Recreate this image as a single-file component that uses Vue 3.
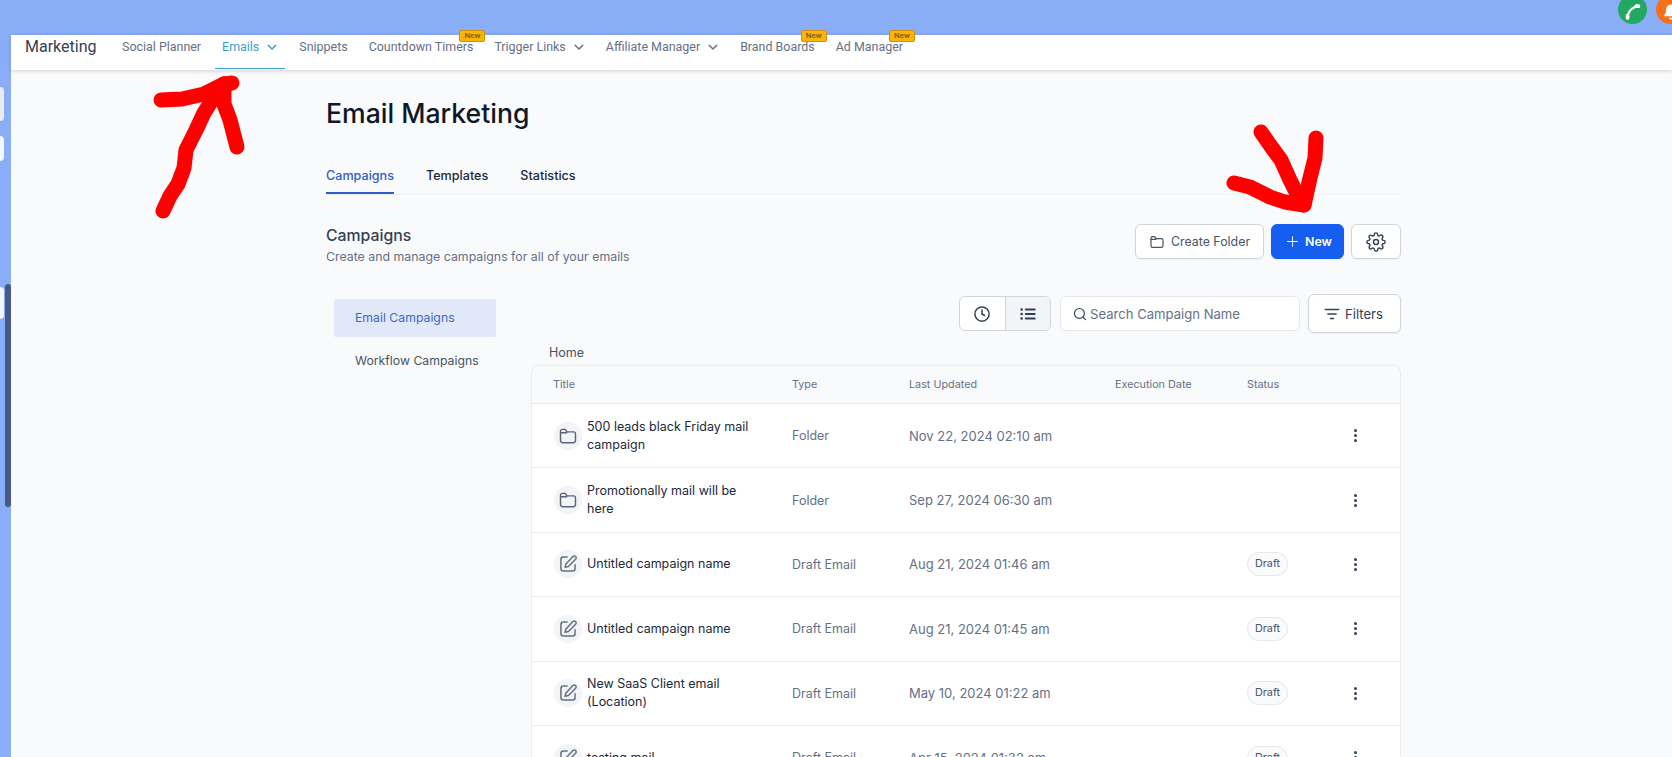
<template>
  <div class="page">
    <header class="topbar">
      <span class="call-btn">
        <svg viewBox="0 0 24 24" width="20" height="20" fill="none" stroke="#fff" stroke-linecap="round">
          <path stroke-width="2.6" d="M5.500 19c0-7 5-13 13-14"></path>
          <path stroke-width="4.600" d="M5.500 19v-2.500M18.500 5H16"></path>
        </svg>
      </span>
      <span class="bell-btn">
        <svg viewBox="0 0 24 24" width="20" height="20" fill="#fff">
          <path d="M12 3a6 6 0 0 0-6 6c0 5-2 7-3 8h18c-1-1-3-3-3-8a6 6 0 0 0-6-6z"></path>
          <path d="M9.5 19a2.6 2.6 0 0 0 5 0z"></path>
        </svg>
      </span>
    </header>

    <div class="body-row">
      <aside class="strip">
        <span class="stub stub-a"></span>
        <span class="stub stub-b"></span>
        <span class="stub stub-c"></span>
        <span class="thumb"></span>
      </aside>

      <div class="content">
        <nav class="subnav">
          <span class="brand">Marketing</span>
          <a v-for="item in navItems" :key="item.label" class="nav-item" :class="{ active: item.active }">
            <span class="nav-label">
              {{ item.label }}
              <svg v-if="item.caret" class="caret" viewBox="0 0 12 12" width="12" height="12" fill="none" stroke="currentColor" stroke-width="1.5" stroke-linecap="round" stroke-linejoin="round">
                <path d="M2.2 4.2 6 8l3.8-3.8"></path>
              </svg>
            </span>
            <span v-if="item.isNew" class="new-badge">New</span>
          </a>
        </nav>

        <main class="main">
          <h1 class="page-title">Email Marketing</h1>

          <div class="tabs">
            <a class="tab current">Campaigns</a>
            <a class="tab">Templates</a>
            <a class="tab">Statistics</a>
          </div>

          <section class="heading-row">
            <div class="heading-text">
              <h2 class="section-title">Campaigns</h2>
              <p class="section-sub">Create and manage campaigns for all of your emails</p>
            </div>
            <div class="actions">
              <button class="btn btn-folder">
                <svg viewBox="0 0 24 24" width="16" height="16" fill="none" stroke="currentColor" stroke-width="1.8" stroke-linecap="round" stroke-linejoin="round">
                  <path d="M3 6.5C3 5.1 4 4 5.4 4h3.2l2 3h8c1.3 0 2.4 1.1 2.4 2.5v8c0 1.4-1.1 2.5-2.4 2.5H5.4C4 20 3 18.900 3 17.500z"></path>
                  <path d="M3 8h7.500"></path>
                </svg>
                Create Folder
              </button>
              <button class="btn btn-new">
                <svg viewBox="0 0 24 24" width="13" height="13" fill="none" stroke="currentColor" stroke-width="1.800" stroke-linecap="round">
                  <path d="M12 3v18M3 12h18"></path>
                </svg>
                New
              </button>
              <button class="btn btn-gear" aria-label="Settings">
                <svg viewBox="0 0 24 24" width="20" height="20" fill="none" stroke="#344054" stroke-width="1.7" stroke-linecap="round" stroke-linejoin="round">
                  <circle cx="12" cy="12" r="3"></circle>
                  <path d="M19.400 15a1.650 1.650 0 0 0 .33 1.820l.06.06a2 2 0 0 1 0 2.830 2 2 0 0 1-2.830 0l-.06-.06a1.650 1.650 0 0 0-1.820-.33 1.650 1.650 0 0 0-1 1.510V21a2 2 0 0 1-2 2 2 2 0 0 1-2-2v-.09A1.650 1.650 0 0 0 9 19.400a1.650 1.650 0 0 0-1.820.33l-.06.06a2 2 0 0 1-2.830 0 2 2 0 0 1 0-2.830l.06-.06a1.650 1.650 0 0 0 .33-1.820 1.650 1.650 0 0 0-1.510-1H3a2 2 0 0 1-2-2 2 2 0 0 1 2-2h.09A1.650 1.650 0 0 0 4.600 9a1.650 1.650 0 0 0-.33-1.820l-.06-.06a2 2 0 0 1 0-2.830 2 2 0 0 1 2.830 0l.06.06a1.650 1.650 0 0 0 1.820.33H9a1.650 1.650 0 0 0 1-1.510V3a2 2 0 0 1 2-2 2 2 0 0 1 2 2v.09a1.650 1.650 0 0 0 1 1.510 1.650 1.650 0 0 0 1.820-.33l.06-.06a2 2 0 0 1 2.830 0 2 2 0 0 1 0 2.830l-.06.06a1.650 1.650 0 0 0-.33 1.820V9a1.650 1.650 0 0 0 1.510 1H21a2 2 0 0 1 2 2 2 2 0 0 1-2 2h-.09a1.650 1.650 0 0 0-1.510 1z"></path>
                </svg>
              </button>
            </div>
          </section>

          <div class="split">
            <div class="side-menu">
              <a class="side-item selected">Email Campaigns</a>
              <a class="side-item">Workflow Campaigns</a>
            </div>

            <div class="list-area">
              <div class="toolbar">
                <div class="view-toggle">
                  <span class="view-btn">
                    <svg viewBox="0 0 24 24" width="18" height="18" fill="none" stroke="#344054" stroke-width="2" stroke-linecap="round" stroke-linejoin="round">
                      <circle cx="12" cy="12" r="9.500"></circle>
                      <path d="M12 6.500V12l3.500 2"></path>
                    </svg>
                  </span>
                  <span class="view-btn on">
                    <svg viewBox="0 0 24 24" width="18" height="18" fill="none" stroke="#344054" stroke-width="2.400" stroke-linecap="round">
                      <path d="M9 6h12M9 12h12M9 18h12"></path>
                      <path stroke-width="3.400" d="M3.500 6h.1M3.500 12h.1M3.500 18h.1"></path>
                    </svg>
                  </span>
                </div>
                <div class="search">
                  <svg viewBox="0 0 24 24" width="14" height="14" fill="none" stroke="#344054" stroke-width="2" stroke-linecap="round">
                    <circle cx="11" cy="11" r="8.500"></circle>
                    <path d="m17.500 17.500 4 4"></path>
                  </svg>
                  <span>Search Campaign Name</span>
                </div>
                <button class="btn btn-filter">
                  <svg viewBox="0 0 24 24" width="18" height="18" fill="none" stroke="#344054" stroke-width="1.900" stroke-linecap="round">
                    <path d="M3 6h18M6.500 12h11M10 18h4"></path>
                  </svg>
                  Filters
                </button>
              </div>

              <div class="crumb">Home</div>

              <div class="table">
                <div class="row head">
                  <span>Title</span>
                  <span>Type</span>
                  <span>Last Updated</span>
                  <span>Execution Date</span>
                  <span>Status</span>
                  <span></span>
                </div>
                <div v-for="row in rows" :key="row.date" class="row">
                  <div class="title-cell">
                    <span class="row-icon">
                      <svg v-if="row.type === 'Folder'" viewBox="0 0 24 24" width="20" height="20" fill="none" stroke="#5a6478" stroke-width="1.700" stroke-linecap="round" stroke-linejoin="round">
                        <path d="M3 6.500C3 5.100 4 4 5.400 4h3.200l2 3h8c1.300 0 2.400 1.100 2.400 2.500v8c0 1.400-1.100 2.500-2.400 2.500H5.400C4 20 3 18.900 3 17.500z"></path>
                        <path d="M3 8h7.500"></path>
                      </svg>
                      <svg v-else viewBox="0 0 24 24" width="20" height="20" fill="none" stroke="#667085" stroke-width="1.800" stroke-linecap="round" stroke-linejoin="round">
                        <path d="M11 3.500H6.500a3 3 0 0 0-3 3v11a3 3 0 0 0 3 3h11a3 3 0 0 0 3-3V13"></path>
                        <path d="M18.200 2.800a2.300 2.300 0 0 1 3.200 3.200L12.500 15l-4 1 1-4z"></path>
                      </svg>
                    </span>
                    <span class="row-name">{{ row.name }}</span>
                  </div>
                  <span class="muted">{{ row.type }}</span>
                  <span class="muted date">{{ row.date }}</span>
                  <span></span>
                  <span><span v-if="row.type !== 'Folder'" class="pill">Draft</span></span>
                  <span class="dots"><i></i><i></i><i></i></span>
                </div>
              </div>
            </div>
          </div>
        </main>
      </div>
    </div>

    <!-- hand drawn marks on top of the screenshot -->
    <svg class="scribble" viewBox="0 0 1672 757" fill="none" stroke="#fe0000" stroke-width="15" stroke-linecap="round" stroke-linejoin="round">
      <path d="M163 211 L170 196 L178 184 L184 168 L186 150 L196 130 L204 113 L214 97 L224 84"></path>
      <path d="M161 100 L182 99 L204 94 L224 84 L232 83"></path>
      <path d="M224 84 L224 104 L230 120 L237 147"></path>
      <path d="M1261 132 L1270 145 L1281 160 L1290 180 L1302 204"></path>
      <path d="M1316 138 L1315 158 L1310 178 L1304 205"></path>
      <path d="M1234 183 L1250 187 L1270 197 L1285 202 L1304 205"></path>
    </svg>
  </div>
</template>

<script setup>
const navItems = [
  { label: 'Social Planner' },
  { label: 'Emails', caret: true, active: true },
  { label: 'Snippets' },
  { label: 'Countdown Timers', isNew: true },
  { label: 'Trigger Links', caret: true },
  { label: 'Affiliate Manager', caret: true },
  { label: 'Brand Boards', isNew: true },
  { label: 'Ad Manager', isNew: true }
]

const rows = [
  { name: '500 leads black Friday mail campaign', type: 'Folder', date: 'Nov 22, 2024 02:10 am' },
  { name: 'Promotionally mail will be here', type: 'Folder', date: 'Sep 27, 2024 06:30 am' },
  { name: 'Untitled campaign name', type: 'Draft Email', date: 'Aug 21, 2024 01:46 am' },
  { name: 'Untitled campaign name', type: 'Draft Email', date: 'Aug 21, 2024 01:45 am' },
  { name: 'New SaaS Client email (Location)', type: 'Draft Email', date: 'May 10, 2024 01:22 am' },
  { name: 'testing mail', type: 'Draft Email', date: 'Apr 15, 2024 01:32 am' }
]
</script>

<style>
html, body {
  margin: 0;
  overflow: hidden;
}
</style>

<style scoped>
.page {
  position: relative;
  width: 1672px;
  height: 757px;
  overflow: hidden;
  background: #f9fafb;
  font-family: Inter, "Liberation Sans", sans-serif;
  color: #101828;
}

/* top blue bar */
.topbar {
  height: 35px;
  background: #8aadf8;
  overflow: hidden;
  display: flex;
  justify-content: flex-end;
  gap: 9px;
  margin-right: -13px;
}
.call-btn, .bell-btn {
  width: 29px;
  height: 29px;
  box-sizing: border-box;
  padding-top: 4px;
  border-radius: 50%;
  margin-top: -5px;
  display: flex;
  align-items: center;
  justify-content: center;
  flex-shrink: 0;
}
.call-btn { background: #22a861; }
.bell-btn { background: #f9701a; }

.body-row {
  display: flex;
  height: 722px;
}

/* left strip */
.strip {
  position: relative;
  width: 11px;
  flex-shrink: 0;
  background: #8aadf8;
}
.stub {
  display: block;
  width: 4px;
  background: #f4f6fa;
  border-radius: 0 4px 4px 0;
}
.stub-a { margin-top: 52px; height: 34px; background: #e9ebef; }
.stub-b { margin-top: 15px; height: 25px; }
.stub-c { margin-top: 126px; height: 32px; }
.thumb {
  position: absolute;
  top: 249px;
  left: 5px;
  width: 6px;
  height: 223px;
  border-radius: 3px;
  background: #475a85;
}

.content {
  flex: 1;
  min-width: 0;
}

/* sub navigation */
.subnav {
  height: 35px;
  background: #fff;
  box-shadow: 0 1px 4px rgba(16, 24, 40, 0.18);
  display: flex;
  gap: 7px;
  font-family: Roboto, "Liberation Sans", sans-serif;
  position: relative;
}
.brand {
  width: 97px;
  padding-left: 14px;
  box-sizing: border-box;
  margin-top: 2px;
  font-size: 16px;
  color: #344054;
  line-height: 20px;
  flex-shrink: 0;
}
.nav-item {
  position: relative;
  padding: 0 7px;
  height: 33px;
  font-size: 12.45px;
  line-height: 24px;
  color: #667085;
  white-space: nowrap;
}
.nav-item.active {
  color: #3d9fcb;
  border-bottom: 1px solid #3d9fcb;
}
.nav-label {
  display: flex;
  align-items: center;
  gap: 7px;
}
.caret { margin-top: -1px; }
.new-badge {
  position: absolute;
  top: -5px;
  right: -5px;
  width: 26px;
  height: 12px;
  box-sizing: border-box;
  background: #fbb40c;
  border: 1px solid #d08f08;
  border-radius: 2px;
  font-size: 8px;
  font-weight: 500;
  line-height: 10px;
  text-align: center;
  color: #7a5a08;
}

/* page body */
.main {
  width: 1075px;
  margin-left: 315px;
}
.page-title {
  margin: 26px 0 0;
  font-size: 26.600px;
  line-height: 34px;
  font-weight: 500;
  color: #101828;
}
.tabs {
  display: flex;
  gap: 32px;
  margin-top: 29px;
  height: 35px;
  border-bottom: 1px solid #f0f1f4;
}
.tab {
  font-size: 12.600px;
  font-weight: 500;
  line-height: 33px;
  height: 35px;
  box-sizing: border-box;
  color: #1d2939;
}
.tab.current {
  color: #2f5fc4;
  border-bottom: 2px solid #2f5fc4;
}

.heading-row {
  display: flex;
  justify-content: space-between;
  margin-top: 29px;
}
.heading-text {
  padding-top: 1px;
}
.section-title {
  margin: 0;
  font-size: 15.800px;
  line-height: 22px;
  font-weight: 500;
  color: #344054;
}
.section-sub {
  margin: 0;
  font-size: 12.350px;
  line-height: 20px;
  color: #667085;
}
.actions {
  display: flex;
  gap: 7px;
}
.btn {
  height: 35px;
  box-sizing: border-box;
  display: inline-flex;
  align-items: center;
  justify-content: center;
  gap: 6px;
  border: 1px solid #d0d5dd;
  border-radius: 6px;
  background: #fff;
  font-family: inherit;
  font-size: 12.400px;
  color: #475467;
  padding: 0;
  box-shadow: 0 1px 2px rgba(16, 24, 40, 0.05);
}
.btn-folder { width: 129px; }
.btn-new {
  width: 73px;
  padding-left: 3px;
  background: #155eef;
  border-color: #155eef;
  color: #fff;
  font-weight: 600;
}
.btn-gear { width: 50px; }

.split {
  display: flex;
  margin-top: 27px;
}
.side-menu {
  width: 162px;
  margin-left: 8px;
  margin-right: 35px;
  flex-shrink: 0;
  padding-top: 5px;
}
.side-item {
  display: block;
  height: 38px;
  line-height: 38px;
  padding-left: 21px;
  font-size: 12.250px;
  color: #475467;
  margin-bottom: 5px;
}
.side-item.selected {
  background: #e1e9f8;
  color: #3f67c8;
  border-radius: 2px;
}

.list-area {
  flex: 1;
  min-width: 0;
}
.toolbar {
  display: flex;
  justify-content: flex-end;
  align-items: center;
  gap: 8px;
  height: 39px;
}
.view-toggle {
  display: flex;
  height: 35px;
  box-sizing: border-box;
  width: 92px;
  margin-right: 1px;
  border: 1px solid #d0d5dd;
  border-radius: 6px;
  overflow: hidden;
  background: #fff;
}
.view-btn {
  flex: 1;
  display: flex;
  align-items: center;
  justify-content: center;
}
.view-btn.on {
  background: #f2f4f7;
  border-left: 1px solid #d0d5dd;
}
.search {
  width: 240px;
  height: 35px;
  box-sizing: border-box;
  display: flex;
  align-items: center;
  gap: 3px;
  padding-left: 12px;
  border: 1px solid #e4e7ec;
  border-radius: 6px;
  background: #fff;
  font-size: 13.100px;
  color: #667085;
}
.btn-filter {
  width: 93px;
  height: 39px;
  padding-right: 3px;
  color: #344054;
  font-size: 13.100px;
  gap: 4px;
}

.crumb {
  margin: 12px 0 0 18px;
  font-size: 12.500px;
  line-height: 16px;
  color: #475467;
}

.table {
  margin-top: 4px;
  background: #fff;
  border: 1px solid #eaecf0;
  border-bottom: 0;
  border-radius: 8px 8px 0 0;
  font-size: 12.500px;
}
.row {
  display: grid;
  grid-template-columns: 239px 117px 206px 132px 107px 1fr;
  align-items: center;
  height: 64.400px;
  box-sizing: border-box;
  padding-left: 21px;
  border-bottom: 1px solid #eaecf0;
}
.row.head {
  height: 38px;
  padding-bottom: 1px;
  background: #f9fafb;
  border-radius: 8px 8px 0 0;
  font-size: 10.800px;
  color: #667085;
}
.title-cell {
  display: flex;
  align-items: center;
  gap: 5px;
}
.row-icon {
  width: 28px;
  height: 28px;
  border-radius: 50%;
  background: #f2f4f7;
  display: flex;
  align-items: center;
  justify-content: center;
  flex-shrink: 0;
  margin-left: 1px;
}
.row-name {
  width: 165px;
  line-height: 18px;
  color: #1d2939;
}
.muted {
  color: #667085;
}
.date {
  font-size: 13px;
}
.pill {
  display: inline-block;
  padding: 0 7px;
  height: 24px;
  line-height: 22px;
  box-sizing: border-box;
  border: 1px solid #e4e7ec;
  border-radius: 12px;
  background: #f9fafb;
  font-size: 10.800px;
  color: #475467;
}
.dots {
  display: flex;
  flex-direction: column;
  align-items: flex-start;
  gap: 2px;
}
.dots i {
  width: 3px;
  height: 3px;
  border-radius: 50%;
  background: #344054;
}

.scribble {
  position: absolute;
  left: 0;
  top: 0;
  width: 1672px;
  height: 757px;
  pointer-events: none;
}
</style>
